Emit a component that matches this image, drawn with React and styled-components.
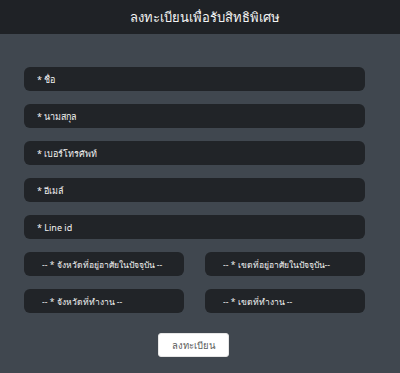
import React from "react";
import styled, { createGlobalStyle } from "styled-components";

const Global = createGlobalStyle`
  html, body { margin: 0; padding: 0; background: #40474f; }
  body { font-family: "Noto Sans", "Liberation Sans", sans-serif; }
  #root { min-height: 373px; }
  * { box-sizing: border-box; }
`;

const Page = styled.div`
  width: 400px;
  min-height: 373px;
  background: #40474f;
  display: flex;
  flex-direction: column;
`;

const Header = styled.header`
  height: 34px;
  background: #1f2226;
  display: flex;
  align-items: center;
  justify-content: center;
  padding-left: 10px;
`;

const Title = styled.h1`
  margin: 0;
  color: #f4f4f4;
  font-size: 13px;
  font-weight: 300;
  letter-spacing: 0;
`;

const Form = styled.form`
  display: flex;
  flex-direction: column;
  gap: 13px;
  padding: 33px 35px 0 24px;
`;

const Field = styled.input`
  height: 24px;
  width: 100%;
  border: none;
  outline: none;
  border-radius: 6px;
  background: #212428;
  color: #fff;
  font-family: inherit;
  font-size: 9px;
  padding: 0 13px;
  &::placeholder { color: #f2f2f2; opacity: 1; }
`;

const Row = styled.div`
  display: grid;
  grid-template-columns: 160px 160px;
  column-gap: 21px;
`;

const Select = styled.select`
  height: 24px;
  width: 100%;
  border: none;
  outline: none;
  border-radius: 6px;
  background: #212428;
  color: #f2f2f2;
  font-family: inherit;
  font-size: 8.5px;
  padding: 0 4px 0 18px;
  appearance: none;
  -webkit-appearance: none;
`;

const Actions = styled.div`
  display: flex;
  justify-content: center;
  padding-top: 7px;
  padding-right: 2px;
`;

const Button = styled.button`
  width: 71px;
  height: 24px;
  background: #fff;
  border: 1px solid #e6e6e6;
  border-radius: 3px;
  color: #5a5a5a;
  font-family: inherit;
  font-size: 9.5px;
  padding: 0;
`;

export default function App() {
  return (
    <Page>
      <Global />
      <Header>
        <Title>ลงทะเบียนเพื่อรับสิทธิพิเศษ</Title>
      </Header>
      <Form onSubmit={(e) => e.preventDefault()}>
        <Field placeholder="* ชื่อ" />
        <Field placeholder="* นามสกุล" />
        <Field placeholder="* เบอร์โทรศัพท์" />
        <Field placeholder="* อีเมล์" />
        <Field placeholder="* Line id" />
        <Row>
          <Select defaultValue="">
            <option value="">-- * จังหวัดที่อยู่อาศัยในปัจจุบัน --</option>
          </Select>
          <Select defaultValue="">
            <option value="">-- * เขตที่อยู่อาศัยในปัจจุบัน--</option>
          </Select>
        </Row>
        <Row>
          <Select defaultValue="">
            <option value="">-- * จังหวัดที่ทำงาน --</option>
          </Select>
          <Select defaultValue="">
            <option value="">-- * เขตที่ทำงาน --</option>
          </Select>
        </Row>
        <Actions>
          <Button type="submit">ลงทะเบียน</Button>
        </Actions>
      </Form>
    </Page>
  );
}
